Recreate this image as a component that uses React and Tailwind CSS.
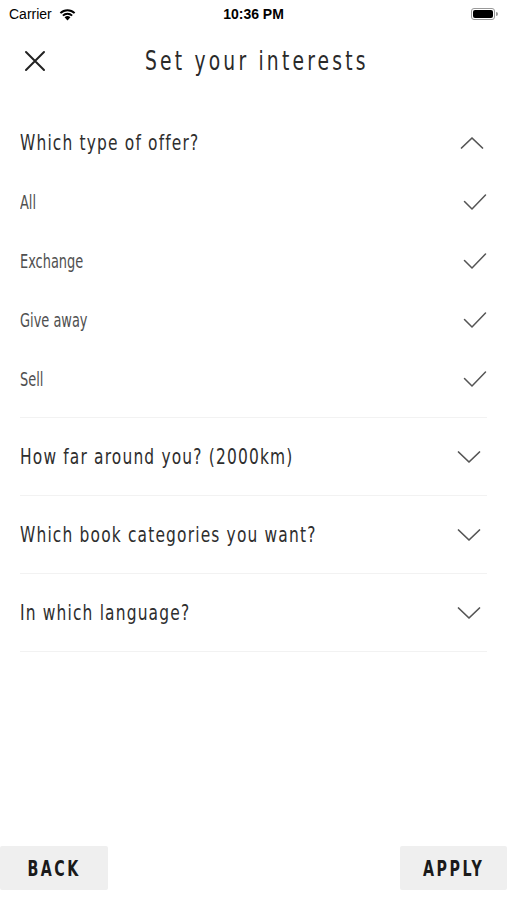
import React from "react";

const F = "font-['DejaVu_Sans_Condensed',sans-serif]";

function ChevronDown() {
  return (
    <svg width="24" height="14" viewBox="0 0 24 14" fill="none" stroke="#555" strokeWidth="1.7" strokeLinecap="round" strokeLinejoin="round">
      <path d="M1.5 2 L12 12 L22.5 2" />
    </svg>
  );
}
function ChevronUp() {
  return (
    <svg width="24" height="14" viewBox="0 0 24 14" fill="none" stroke="#555" strokeWidth="1.7" strokeLinecap="round" strokeLinejoin="round">
      <path d="M1.5 12 L12 2 L22.5 12" />
    </svg>
  );
}
function Check() {
  return (
    <svg width="24" height="18" viewBox="0 0 24 18" fill="none" stroke="#555" strokeWidth="1.5" strokeLinecap="round" strokeLinejoin="round">
      <path d="M1.5 8.5 L9 16 L22.5 2" />
    </svg>
  );
}

function Section({ title, open, children }) {
  return (
    <div className="border-b border-[#f2f2f2]">
      <div className={`flex items-center justify-between h-[77px] ${open ? "pr-[3px]" : "pr-[6px]"}`}>
        <span className={`inline-block origin-left scale-x-[0.78] whitespace-nowrap text-[22px] tracking-[1.5px] text-[#2e2e2e] ${F}`}>{title}</span>
        {open ? <ChevronUp /> : <ChevronDown />}
      </div>
      {children}
    </div>
  );
}

export default function App() {
  const opts = ["All", "Exchange", "Give away", "Sell"];
  return (
    <div className="w-[507px] h-[900px] bg-white flex flex-col relative overflow-hidden">
      {/* status bar */}
      <div className="h-[28px] flex items-center justify-between px-[9px] text-[14px] text-black font-['Liberation_Sans',sans-serif]">
        <div className="flex items-center gap-[6px] w-[120px]">
          <span>Carrier</span>
          <svg width="19" height="13" viewBox="0 0 17 12">
            <path d="M8.5 11.5 L5.8 8.6 A3.9 3.9 0 0 1 11.2 8.6 Z" fill="#000" />
            <path d="M3.6 6.4 A7 7 0 0 1 13.4 6.4 L12.1 7.7 A5.2 5.2 0 0 0 4.9 7.7 Z" fill="#000" />
            <path d="M1.3 4.1 A10.3 10.3 0 0 1 15.7 4.1 L14.4 5.4 A8.5 8.5 0 0 0 2.6 5.4 Z" fill="#000" />
          </svg>
        </div>
        <span className="font-semibold">10:36 PM</span>
        <div className="w-[120px] flex justify-end">
          <div className="flex items-center">
            <div className="w-[24px] h-[12px] rounded-[3px] border border-[#999] p-[1px]">
              <div className="w-full h-full bg-black rounded-[2px]" />
            </div>
            <div className="w-[2px] h-[4px] bg-[#999] rounded-r-sm ml-[1px]" />
          </div>
        </div>
      </div>

      {/* header */}
      <div className="h-[66px] flex items-center relative">
        <div className="pl-[24px]">
          <svg width="22" height="22" viewBox="0 0 22 22" stroke="#222" strokeWidth="2" strokeLinecap="round">
            <path d="M2 2 L20 20 M20 2 L2 20" />
          </svg>
        </div>
        <div className="absolute inset-0 flex items-center justify-center pl-[6px]">
          <span className={`inline-block origin-center scale-x-[0.8] whitespace-nowrap text-[26px] tracking-[4px] text-[#2a2a2a] ${F}`}>Set your interests</span>
        </div>
      </div>

      {/* sections */}
      <div className="px-[20px] mt-[10px]">
        <Section title="Which type of offer?" open>
          <div className="-mt-[9px] pb-[9px]">
            {opts.map((o) => (
              <div key={o} className="h-[59px] flex items-center justify-between pr-0">
                <span className={`inline-block origin-left scale-x-[0.72] whitespace-nowrap text-[20px] text-[#505050] ${F}`}>{o}</span>
                <Check />
              </div>
            ))}
          </div>
        </Section>
        <Section title="How far around you? (2000km)" />
        <Section title="Which book categories you want?" />
        <Section title="In which language?" />
      </div>

      <div className="flex-1" />

      {/* footer */}
      <div className="flex justify-between items-center pb-[10px]">
        <button className="w-[108px] h-[44px] bg-[#efefef] rounded-[2px] flex items-center justify-center">
          <span className={`inline-block origin-center scale-x-[0.72] text-[22px] tracking-[3.5px] text-[#1a1a1a] font-bold ${F}`}>BACK</span>
        </button>
        <button className="w-[107px] h-[44px] bg-[#efefef] rounded-[2px] flex items-center justify-center">
          <span className={`inline-block origin-center scale-x-[0.72] text-[22px] tracking-[3.5px] text-[#1a1a1a] font-bold ${F}`}>APPLY</span>
        </button>
      </div>
    </div>
  );
}
